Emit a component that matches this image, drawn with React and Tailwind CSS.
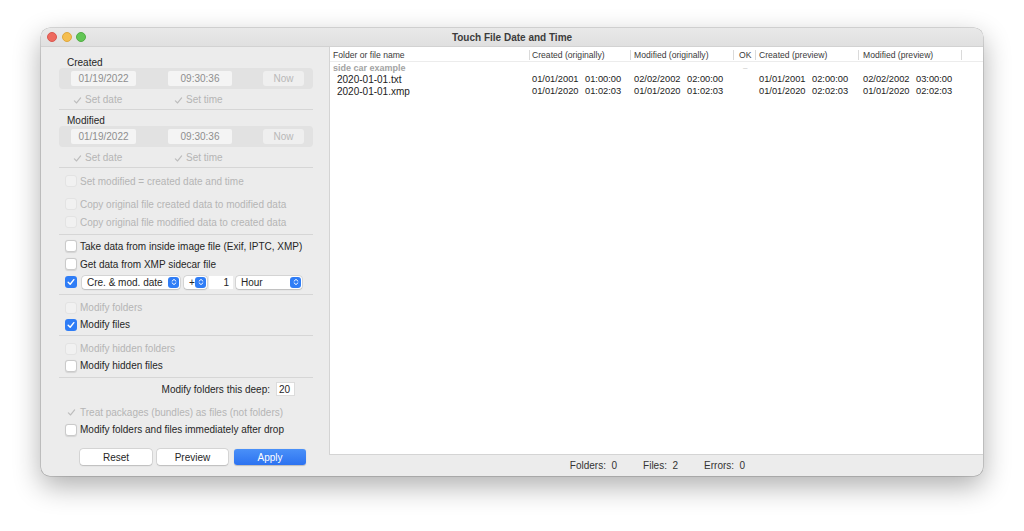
import React from "react";

const CheckMark = ({ className = "", color = "#ffffff", w = "1.7" }) => (
  <svg viewBox="0 0 12 12" className={className}>
    <path d="M2.6 6.4 L5 8.7 L9.4 3.2" fill="none" stroke={color} strokeWidth={w} strokeLinecap="round" strokeLinejoin="round" />
  </svg>
);

function Box({ state }) {
  if (state === "on")
    return (
      <span className="w-[12px] h-[12px] rounded-[3px] bg-[#2f7df6] flex items-center justify-center shrink-0">
        <CheckMark className="w-[10px] h-[10px]" />
      </span>
    );
  if (state === "off")
    return <span className="w-[12px] h-[12px] rounded-[3px] bg-white border border-[#cacaca] shadow-[0_0.5px_1px_rgba(0,0,0,0.1)] shrink-0" />;
  if (state === "disOn")
    return (
      <span className="w-[12px] h-[12px] flex items-center justify-center shrink-0">
        <CheckMark className="w-[11px] h-[11px]" color="#bdbdbd" w="1.3" />
      </span>
    );
  return <span className="w-[12px] h-[12px] rounded-[3px] bg-[#f1f1f1] border border-[#e3e3e3] shrink-0" />;
}

function CheckRow({ state, label, h = "h-[18px]", mt = "" }) {
  const dis = state === "dis" || state === "disOn";
  return (
    <div className={`flex items-center gap-[3px] pl-[6px] ${h} ${mt}`}>
      <Box state={state} />
      <span className={`pt-[1px] ${dis ? "text-[#b5b5b5]" : "text-[#262626]"}`}>{label}</span>
    </div>
  );
}

const Sep = ({ mt = "" }) => <div className={`h-px bg-[#d6d6d6] shrink-0 ${mt}`} />;

const Stepper = () => (
  <span className="w-[11px] h-[11px] rounded-[3px] bg-[#2f7df6] flex items-center justify-center shrink-0">
    <svg viewBox="0 0 8 10" className="w-[6px] h-[8px]">
      <path d="M1.5 3.8 L4 1.5 L6.5 3.8 M1.5 6.2 L4 8.5 L6.5 6.2" fill="none" stroke="#ffffff" strokeWidth="1.3" strokeLinecap="round" strokeLinejoin="round" />
    </svg>
  </span>
);

function DateGroup({ label, mt = "" }) {
  return (
    <>
      <div className={`h-[12px] flex items-center pl-[8px] pt-[1px] text-[#262626] ${mt}`}>{label}</div>
      <div className="h-[21px] rounded-[4px] bg-[#e2e2e2] flex items-center pl-[12px] pr-[9px]">
        <div className="w-[65px] h-[15px] bg-[#f4f4f4] rounded-[2px] flex items-center justify-center pt-[1px] text-[#8e8e8e]">01/19/2022</div>
        <div className="w-[64px] h-[15px] ml-[32px] bg-[#f4f4f4] rounded-[2px] flex items-center justify-center pt-[1px] text-[#8e8e8e]">09:30:36</div>
        <div className="w-[41px] h-[15px] ml-[31px] bg-[#efefef] rounded-[3px] flex items-center justify-center pt-[1px] text-[#b8b8b8]">Now</div>
      </div>
      <div className="h-[20px] flex items-center pt-[2px]">
        <div className="flex items-center gap-[2px] pl-[12px] w-[113px]">
          <Box state="disOn" />
          <span className="text-[#b5b5b5]">Set date</span>
        </div>
        <div className="flex items-center gap-[2px]">
          <Box state="disOn" />
          <span className="text-[#b5b5b5]">Set time</span>
        </div>
      </div>
    </>
  );
}

const selShadow = "bg-white rounded-[3px] shadow-[0_0_0_0.5px_rgba(0,0,0,0.14),0_0.5px_1.5px_rgba(0,0,0,0.14)]";

function HCell({ children, divider = true, pl = "pl-[3px]" }) {
  return (
    <div className={`flex items-center justify-between ${pl}`}>
      <span className="pt-[1px]">{children}</span>
      {divider && <span className="w-px h-[10px] bg-[#dadada]" />}
    </div>
  );
}

const DT = ({ d, t, pl = "pl-[2px]" }) => (
  <div className={`flex items-center text-[9.3px] text-[#222222] ${pl}`}>
    <span className="w-[53px]">{d}</span>
    <span>{t}</span>
  </div>
);

const gridCols = "grid grid-cols-[200px_101px_103px_22px_103px_103px_1fr]";

export default function App() {
  return (
    <div className="bg-white w-[1024px] h-[531px] pt-[28px] pl-[41px] font-['Liberation_Sans',Arial,sans-serif] text-[10px] leading-none">
      <div className="w-[942px] h-[448px] rounded-[9px] bg-[#ececec] overflow-hidden flex flex-col shadow-[0_10px_28px_rgba(0,0,0,0.32),0_0_0_0.5px_rgba(0,0,0,0.25)]">
        {/* Title bar */}
        <div className="h-[19px] shrink-0 grid grid-cols-[1fr_auto_1fr] items-center bg-gradient-to-b from-[#e9e9e9] to-[#e0e0e0] border-b border-[#d2d2d2]">
          <div className="flex items-center gap-[4.5px] pl-[6px]">
            <span className="w-[10px] h-[10px] rounded-full bg-[#ee6a5f] border border-[#d95850]" />
            <span className="w-[10px] h-[10px] rounded-full bg-[#f5be4f] border border-[#dea73d]" />
            <span className="w-[10px] h-[10px] rounded-full bg-[#62c655] border border-[#52ad45]" />
          </div>
          <div className="font-bold text-[#3c3c3c] text-[10px] pt-[1px]">Touch File Date and Time</div>
          <div />
        </div>

        {/* Body */}
        <div className="flex flex-1 min-h-0">
          {/* Left panel */}
          <div className="w-[288px] shrink-0 pl-[18px] pr-[16px] pt-[9px] flex flex-col">
            <DateGroup label="Created" />
            <Sep />
            <DateGroup label="Modified" mt="mt-[4px]" />
            <Sep />
            <CheckRow state="dis" label="Set modified = created date and time" mt="mt-[4px]" />
            <CheckRow state="dis" label="Copy original file created data to modified data" mt="mt-[5px]" />
            <CheckRow state="dis" label="Copy original file modified data to created data" />
            <Sep mt="mt-[3px]" />
            <CheckRow state="off" label="Take data from inside image file (Exif, IPTC, XMP)" mt="mt-[2px]" />
            <CheckRow state="off" label="Get data from XMP sidecar file" />
            <div className="h-[18px] flex items-center pl-[6px] text-[#262626]">
              <Box state="on" />
              <div className={`ml-[5px] w-[98px] h-[13px] flex items-center justify-between pl-[5px] pr-[1px] ${selShadow}`}>
                <span className="pt-[1px]">Cre. &amp; mod. date</span>
                <Stepper />
              </div>
              <div className={`ml-[4px] w-[23px] h-[13px] flex items-center justify-between pl-[5px] pr-[1px] ${selShadow}`}>
                <span className="pt-[1px]">+</span>
                <Stepper />
              </div>
              <div className="ml-[2px] w-[24px] h-[13px] bg-white flex items-center justify-end pr-[4px] pt-[1px]">1</div>
              <div className={`ml-[3px] w-[66px] h-[13px] flex items-center justify-between pl-[5px] pr-[1px] ${selShadow}`}>
                <span className="pt-[1px]">Hour</span>
                <Stepper />
              </div>
            </div>
            <Sep mt="mt-[3px]" />
            <CheckRow state="dis" label="Modify folders" h="h-[17px]" mt="mt-[4px]" />
            <CheckRow state="on" label="Modify files" h="h-[17px]" />
            <Sep mt="mt-[2px]" />
            <CheckRow state="dis" label="Modify hidden folders" h="h-[17px]" mt="mt-[4px]" />
            <CheckRow state="off" label="Modify hidden files" h="h-[17px]" />
            <Sep mt="mt-[3px]" />
            <div className="h-[18px] mt-[2px] flex items-center justify-end pr-[18px] gap-[6px] text-[#262626]">
              <span className="pt-[1px]">Modify folders this deep:</span>
              <div className="w-[19px] h-[14px] bg-white border border-[#dcdcdc] flex items-center pl-[2px] pt-[1px]">20</div>
            </div>
            <CheckRow state="disOn" label="Treat packages (bundles) as files (not folders)" h="h-[17px]" mt="mt-[6px]" />
            <CheckRow state="off" label="Modify folders and files immediately after drop" h="h-[17px]" />
            <div className="mt-[11px] flex items-center pl-[21px] gap-[5px]">
              <div className={`w-[72px] h-[16px] flex items-center justify-center pt-[1px] text-[#262626] ${selShadow}`}>Reset</div>
              <div className={`w-[71px] h-[16px] flex items-center justify-center pt-[1px] text-[#262626] ${selShadow}`}>Preview</div>
              <div className="ml-[1px] w-[72px] h-[16px] rounded-[3px] flex items-center justify-center pt-[1px] text-white bg-gradient-to-b from-[#4a90f8] to-[#2c72f0] shadow-[0_0.5px_1px_rgba(0,0,0,0.2)]">Apply</div>
            </div>
          </div>

          {/* Right column */}
          <div className="flex-1 flex flex-col min-w-0">
            <div className="flex-1 bg-white border-l border-b border-[#d4d4d4]">
              <div className={`${gridCols} h-[15px] pt-[1px] border-b border-[#ececec] text-[8.6px] text-[#3a3a3a]`}>
                <HCell>Folder or file name</HCell>
                <HCell pl="pl-[2px]">Created (originally)</HCell>
                <HCell>Modified (originally)</HCell>
                <HCell pl="pl-[5px]">OK</HCell>
                <HCell>Created (preview)</HCell>
                <HCell pl="pl-[4px]">Modified (preview)</HCell>
                <HCell divider={false}></HCell>
              </div>
              <div className={`${gridCols} h-[12px] items-center`}>
                <div className="pl-[3px] font-bold text-[9px] text-[#a3a3a3]">side car example</div>
                <div />
                <div />
                <div className="pl-[9px] text-[8px] text-[#c4c4c4]">–</div>
                <div />
                <div />
                <div />
              </div>
              <div className={`${gridCols} h-[12px] items-center`}>
                <div className="pl-[7px] text-[#222222]">2020-01-01.txt</div>
                <DT d="01/01/2001" t="01:00:00" />
                <DT d="02/02/2002" t="02:00:00" pl="pl-[3px]" />
                <div />
                <DT d="01/01/2001" t="02:00:00" pl="pl-[3px]" />
                <DT d="02/02/2002" t="03:00:00" pl="pl-[4px]" />
                <div />
              </div>
              <div className={`${gridCols} h-[12px] items-center`}>
                <div className="pl-[7px] text-[#222222]">2020-01-01.xmp</div>
                <DT d="01/01/2020" t="01:02:03" />
                <DT d="01/01/2020" t="01:02:03" pl="pl-[3px]" />
                <div />
                <DT d="01/01/2020" t="02:02:03" pl="pl-[3px]" />
                <DT d="01/01/2020" t="02:02:03" pl="pl-[4px]" />
                <div />
              </div>
            </div>
            <div className="h-[21px] shrink-0 flex items-center justify-center gap-[26px] pt-[1px] pl-[3px] text-[#333333] whitespace-pre">
              <span>Folders:  0</span>
              <span>Files:  2</span>
              <span>Errors:  0</span>
            </div>
          </div>
        </div>
      </div>
    </div>
  );
}
